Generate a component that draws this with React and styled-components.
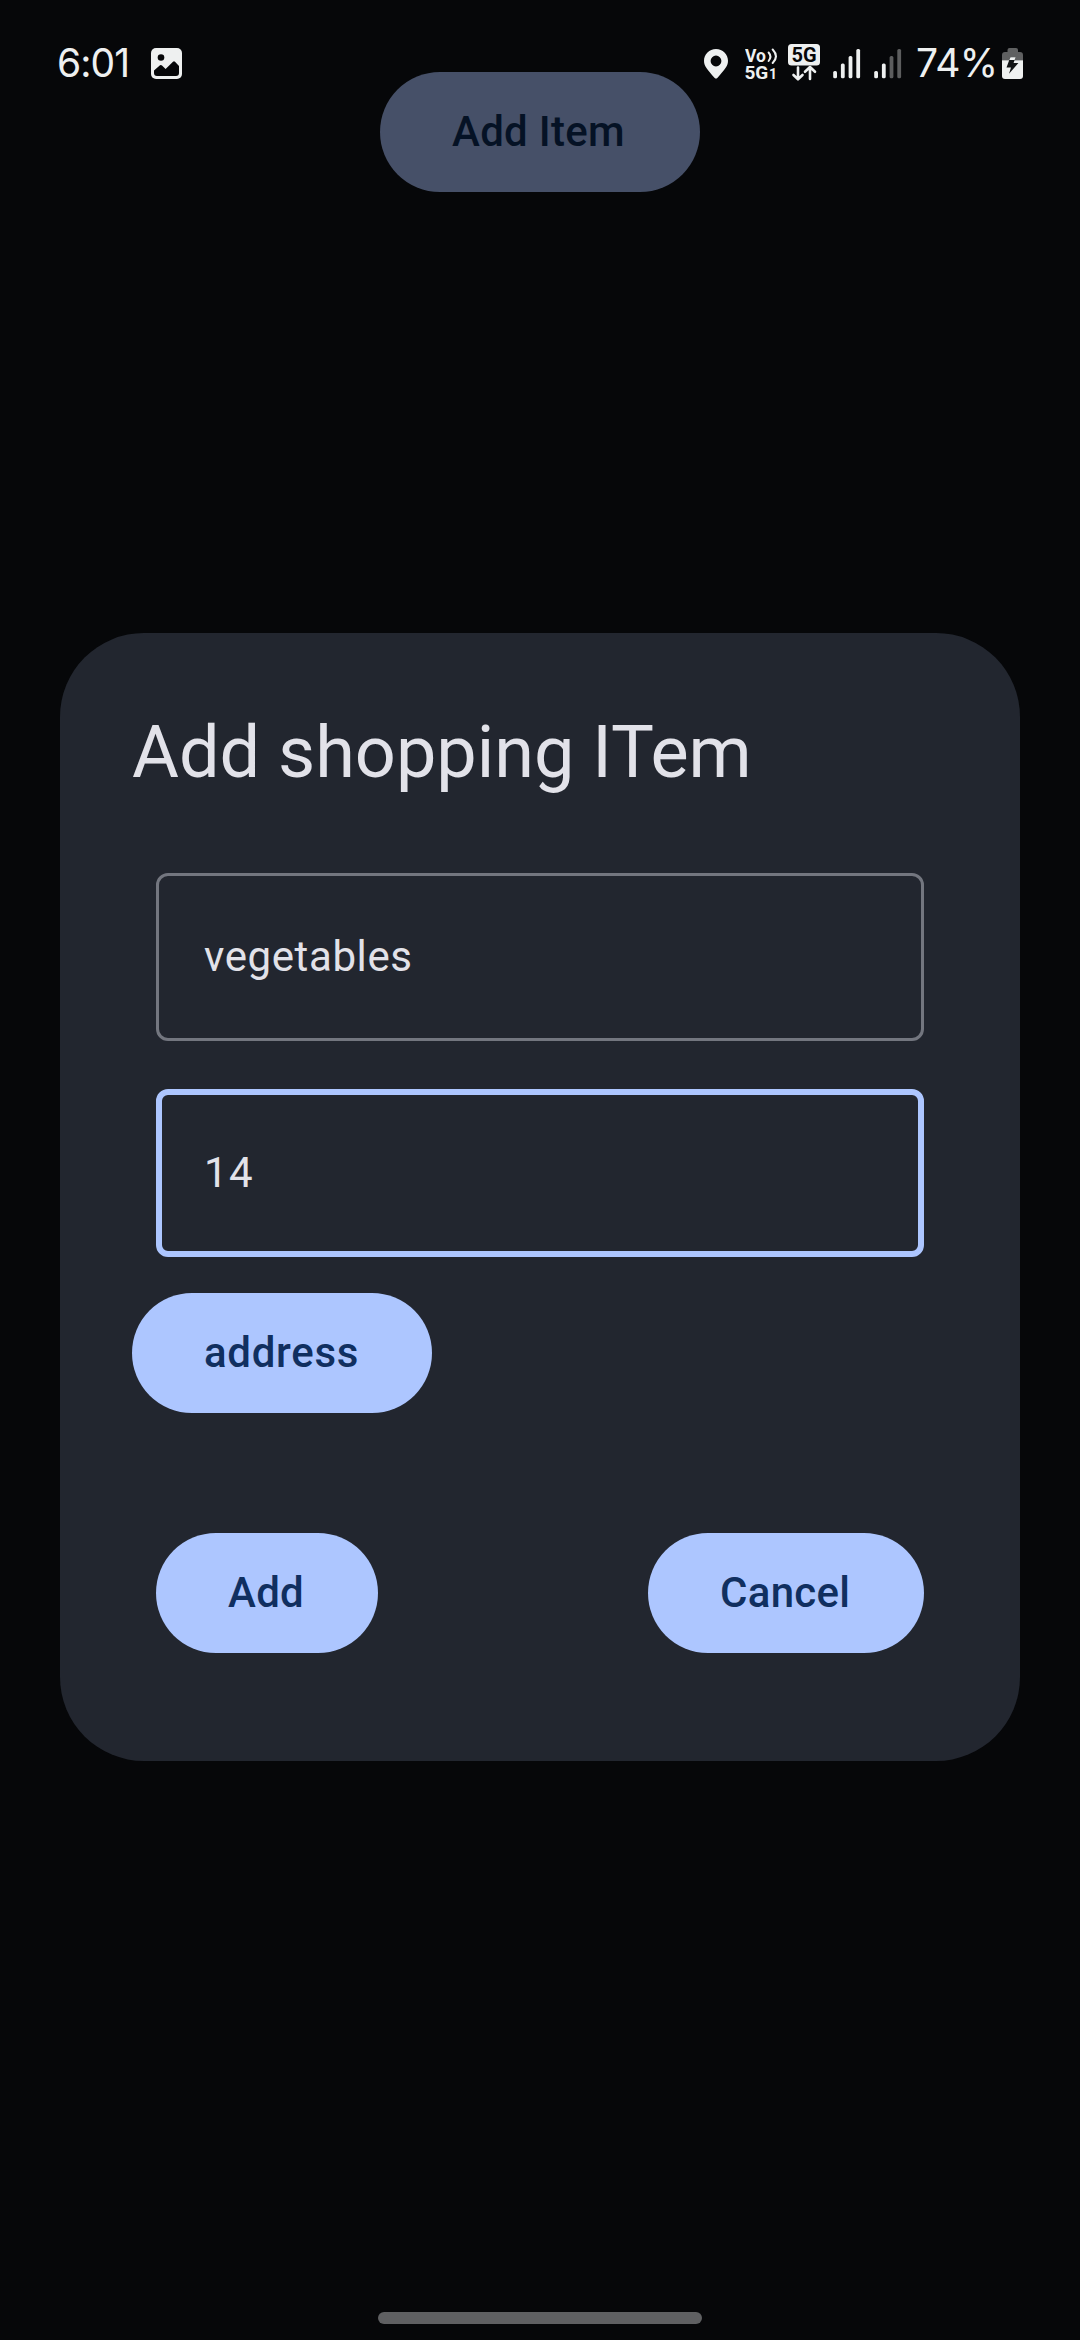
import React from "react";
import styled, { createGlobalStyle } from "styled-components";

const GlobalStyle = createGlobalStyle`
  * { box-sizing: border-box; }
  html, body { margin: 0; padding: 0; background: #060709; }
  body { font-family: Roboto, "Noto Sans", sans-serif; }
`;

const Screen = styled.main`
  position: relative;
  display: flex;
  flex-direction: column;
  align-items: center;
  width: 1080px;
  height: 2340px;
  padding-top: 72px;
  background: #060709;
  overflow: hidden;
`;

const StatusBar = styled.header`
  position: absolute;
  inset: 0 0 auto 0;
  display: flex;
  justify-content: space-between;
  align-items: flex-start;
  height: 96px;
  padding: 40px 57px 0 57px;
  color: #eef0f0;
`;

const StatusGroup = styled.div`
  display: flex;
  align-items: flex-start;
`;

const StatusText = styled.span`
  width: ${(p) => p.$width}px;
  margin-left: ${(p) => p.$gap || 0}px;
  font-family: Inter, Roboto, sans-serif;
  font-size: 39px;
  font-weight: 400;
  line-height: 46px;
  letter-spacing: ${(p) => p.$spacing}px;
  white-space: nowrap;
`;

const Glyph = styled.svg`
  display: block;
  flex: none;
  margin-left: ${(p) => p.$gap || 0}px;
`;

const PillButton = styled.button`
  width: ${(p) => p.$width}px;
  height: 120px;
  padding: 0 0 0 72px;
  border: 0;
  border-radius: 60px;
  background: ${(p) => (p.$dimmed ? "#465068" : "#adc6ff")};
  color: ${(p) => (p.$dimmed ? "#051225" : "#102f60")};
  font-family: inherit;
  font-size: 42px;
  font-weight: 500;
  line-height: 60px;
  letter-spacing: ${(p) => p.$spacing ?? 0.3}px;
  text-align: left;
  white-space: nowrap;
`;

const Dialog = styled.section`
  display: flex;
  flex-direction: column;
  width: 960px;
  height: 1128px;
  margin-top: 441px;
  padding: 72px;
  border-radius: 84px;
  background: #22262f;
`;

const Title = styled.h1`
  margin: 0;
  color: #e2e2e9;
  font-size: 72px;
  font-weight: 400;
  line-height: 96px;
`;

const Fields = styled.div`
  display: flex;
  flex-direction: column;
  gap: 48px;
  padding: 72px 24px 36px;
`;

const Field = styled.input`
  width: 100%;
  height: 168px;
  padding: 0 ${(p) => (p.$focused ? 42 : 45)}px 2px;
  border: ${(p) => (p.$focused ? "6px solid #adc6ff" : "3px solid #73767f")};
  border-radius: 12px;
  outline: 0;
  background: transparent;
  color: #e2e2e9;
  font-family: inherit;
  font-size: 42px;
  letter-spacing: ${(p) => (p.inputMode === "numeric" ? 1.5 : 0.6)}px;
`;

const Actions = styled.div`
  display: flex;
  justify-content: space-between;
  padding: 120px 24px 0;
`;

const HomeHandle = styled.div`
  width: 324px;
  height: 12px;
  margin: auto 0 16px;
  border-radius: 6px;
  background: #5f6062;
`;

function PictureIcon() {
  return (
    <Glyph width="31" height="39" viewBox="151 40 31 39">
      <rect x="151" y="48" width="31" height="31" rx="5" fill="#eef0f0" />
      <circle cx="161" cy="57.5" r="3.3" fill="#060709" />
      <path d="M154 70.5 L160 65.3 Q161 64.6 162 65.5 L165.6 69 L173 61.7 Q174 60.8 175 61.7 L179 66 V73 Q179 76 176 76 H157 Q154 76 154 73Z" fill="#060709" />
    </Glyph>
  );
}

function PinIcon() {
  return (
    <Glyph width="24" height="40" viewBox="704 40 24 40">
      <path fillRule="evenodd" fill="#eef0f0" d="M716 49 C709.3 49 704 54.2 704 60.8 C704 66 707 69.4 714.7 77.9 Q716 79.2 717.3 77.9 C725 69.4 728 66 728 60.8 C728 54.2 722.7 49 716 49Z M716 55.6 A5.4 5.4 0 1 1 716 66.4 A5.4 5.4 0 1 1 716 55.6Z" />
    </Glyph>
  );
}

function VoiceIcon() {
  return (
    <Glyph width="33" height="48" viewBox="745 40 33 48" $gap={17}>
      <g fill="#eef0f0" fontFamily="Roboto, sans-serif" fontWeight="700">
        <text x="745" y="61.7" fontSize="17.5" textLength="21">Vo</text>
        <text x="744.6" y="78.8" fontSize="19" textLength="23.6">5G</text>
        <text x="769" y="78.8" fontSize="14">1</text>
      </g>
      <g fill="none" stroke="#eef0f0" strokeWidth="2" strokeLinecap="round">
        <path d="M768.6 52.5 Q772.2 56.5 768.6 61" />
        <path d="M772.7 49.5 Q779.2 56.5 772.7 63" />
      </g>
    </Glyph>
  );
}

function DataIcon() {
  return (
    <Glyph width="32" height="42" viewBox="788 40 32 42" $gap={10}>
      <rect x="788" y="44" width="32" height="21.5" rx="3.5" fill="#eef0f0" />
      <text x="791.6" y="61.8" fontSize="20" fontFamily="Roboto, sans-serif" fontWeight="700" textLength="25" fill="#060709">5G</text>
      <g fill="none" stroke="#eef0f0" strokeWidth="2.6" strokeLinecap="round" strokeLinejoin="round">
        <path d="M798 67.5 V79 M793.5 75 L798 79.3 L802.5 75" />
        <path d="M810 79 V67.5 M805 71.8 L810 67 L815 71.8" />
      </g>
    </Glyph>
  );
}

function SignalIcon({ level, gap }) {
  const tops = [71, 63.5, 56, 49];
  return (
    <Glyph width="28" height="40" viewBox="0 40 28 40" $gap={gap}>
      {tops.map((top, i) => (
        <rect key={top} x={0.2 + i * 7.7} y={top} width="3.8" height={78.3 - top} rx="1.5" fill={i < level ? "#eef0f0" : "#5c5d5e"} />
      ))}
    </Glyph>
  );
}

function BatteryIcon() {
  return (
    <Glyph width="21" height="39" viewBox="1002 40 21 39">
      <path d="M1007.5 52 V50 Q1007.5 48 1009.5 48 H1016 Q1018 48 1018 50 V52 H1020 Q1023 52 1023 55 V60.3 H1002 V55 Q1002 52 1005 52Z" fill="#5f6061" />
      <path d="M1002 60.3 H1023 V76 Q1023 79 1020 79 H1005 Q1002 79 1002 76Z" fill="#eef0f0" />
      <path d="M1010.2 57.5 H1015.4 L1013.6 63 H1018.4 L1009 73.8 L1011 67.5 H1006.5Z" fill="#111315" />
      <path d="M1010.5 57.3 H1015.6 L1014.6 60.1 H1009.2Z" fill="#eef0f0" />
    </Glyph>
  );
}

export default function App() {
  return (
    <>
      <GlobalStyle />
      <Screen>
        <PillButton $width={320} $dimmed>Add Item</PillButton>
        <StatusBar>
          <StatusGroup>
            <StatusText $width={94} $spacing={-0.9}>6:01</StatusText>
            <PictureIcon />
          </StatusGroup>
          <StatusGroup>
            <PinIcon />
            <VoiceIcon />
            <DataIcon />
            <SignalIcon level={4} gap={13} />
            <SignalIcon level={2} gap={13} />
            <StatusText $gap={14} $width={86} $spacing={-0.6}>74%</StatusText>
            <BatteryIcon />
          </StatusGroup>
        </StatusBar>
        <Dialog>
          <Title>Add shopping ITem</Title>
          <Fields>
            <Field defaultValue="vegetables" />
            <Field defaultValue="14" inputMode="numeric" $focused />
          </Fields>
          <PillButton $width={300} $spacing={0.7}>address</PillButton>
          <Actions>
            <PillButton $width={222}>Add</PillButton>
            <PillButton $width={276}>Cancel</PillButton>
          </Actions>
        </Dialog>
        <HomeHandle />
      </Screen>
    </>
  );
}
